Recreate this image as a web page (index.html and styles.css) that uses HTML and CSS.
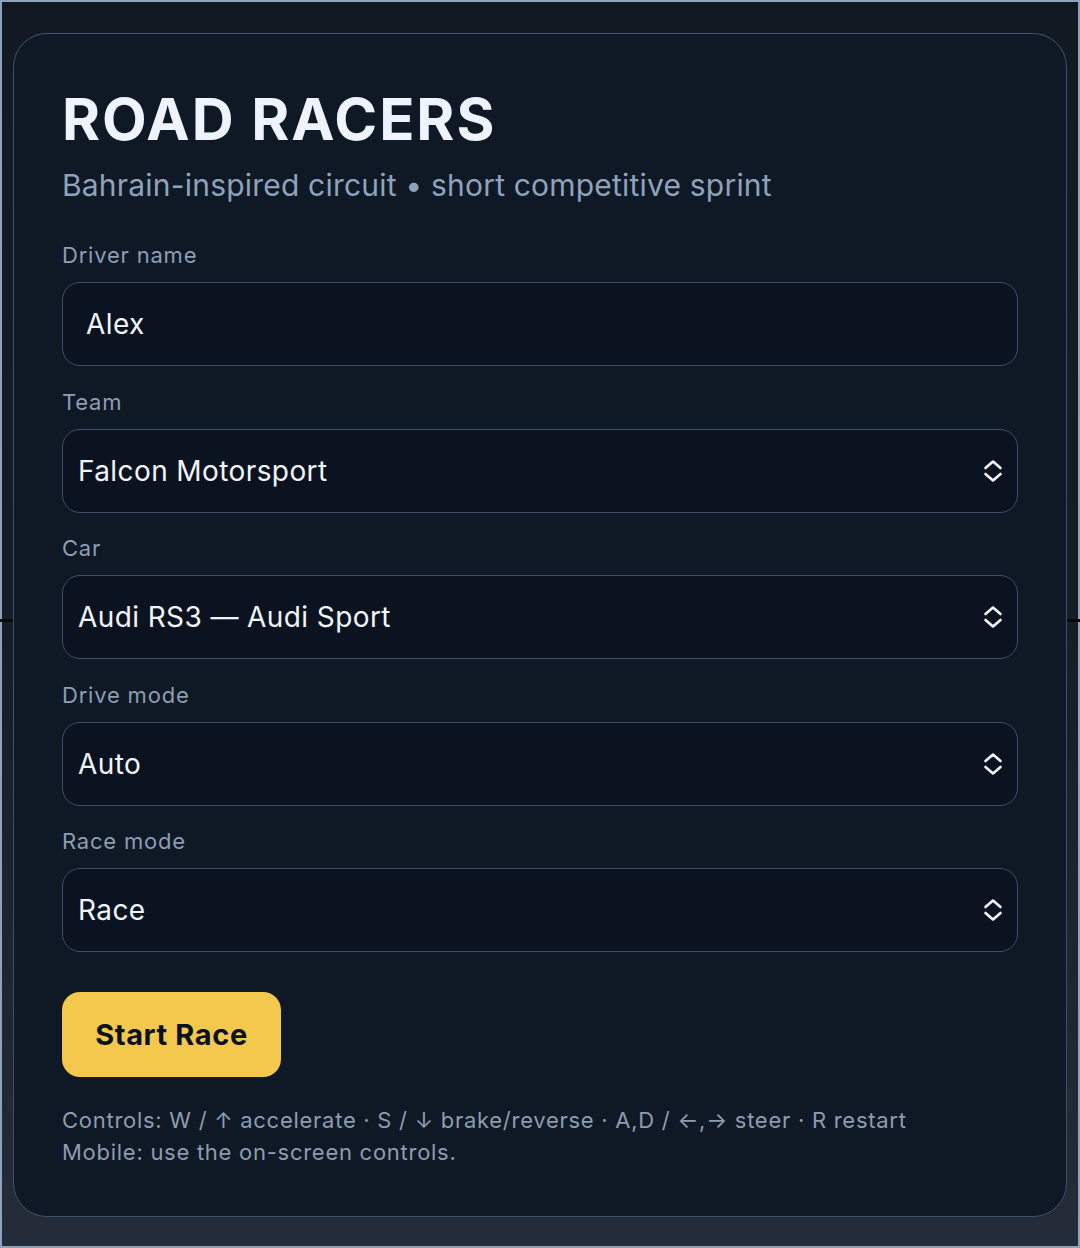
FILE: index.html
```html
<!DOCTYPE html>
<html lang="en">
<head>
<meta charset="utf-8">
<title>Road Racers</title>
<link rel="stylesheet" href="styles.css">
</head>
<body>
<div class="frame">
  <div class="track-line"></div>
  <form class="card">
    <h1 class="title">ROAD RACERS</h1>
    <p class="subtitle">Bahrain-inspired circuit • short competitive sprint</p>

    <label class="field">
      <span class="label">Driver name</span>
      <span class="control input"><span class="value">Alex</span></span>
    </label>

    <label class="field">
      <span class="label">Team</span>
      <span class="control select"><span class="value">Falcon Motorsport</span>
        <svg class="chev" viewBox="0 0 20 24" width="20" height="24"><path d="M2.5 9 L10 2.5 L17.5 9 M2.5 15 L10 21.5 L17.5 15" fill="none" stroke="#f5f7fb" stroke-width="2.6" stroke-linecap="round" stroke-linejoin="round"/></svg>
      </span>
    </label>

    <label class="field">
      <span class="label">Car</span>
      <span class="control select"><span class="value">Audi RS3 — Audi Sport</span>
        <svg class="chev" viewBox="0 0 20 24" width="20" height="24"><path d="M2.5 9 L10 2.5 L17.5 9 M2.5 15 L10 21.5 L17.5 15" fill="none" stroke="#f5f7fb" stroke-width="2.6" stroke-linecap="round" stroke-linejoin="round"/></svg>
      </span>
    </label>

    <label class="field">
      <span class="label">Drive mode</span>
      <span class="control select"><span class="value">Auto</span>
        <svg class="chev" viewBox="0 0 20 24" width="20" height="24"><path d="M2.5 9 L10 2.5 L17.5 9 M2.5 15 L10 21.5 L17.5 15" fill="none" stroke="#f5f7fb" stroke-width="2.6" stroke-linecap="round" stroke-linejoin="round"/></svg>
      </span>
    </label>

    <label class="field">
      <span class="label">Race mode</span>
      <span class="control select"><span class="value">Race</span>
        <svg class="chev" viewBox="0 0 20 24" width="20" height="24"><path d="M2.5 9 L10 2.5 L17.5 9 M2.5 15 L10 21.5 L17.5 15" fill="none" stroke="#f5f7fb" stroke-width="2.6" stroke-linecap="round" stroke-linejoin="round"/></svg>
      </span>
    </label>

    <div class="actions">
      <button type="button" class="start">Start Race</button>
    </div>

    <p class="help">Controls: W / ↑ accelerate · S / ↓ brake/reverse · A,D / ←,→ steer · R restart<br>Mobile: use the on-screen controls.</p>
  </form>
</div>
</body>
</html>
```

FILE: styles.css
```css
* { box-sizing: border-box; }

html, body {
  margin: 0;
  padding: 0;
  height: 1248px;
  font-family: "Inter", "Noto Sans", "Liberation Sans", sans-serif;
}

body {
  background: #1a202a;
}

.frame {
  position: relative;
  height: 1248px;
  border: 2px solid #8ea2bb;
  background: linear-gradient(180deg, #131922 0%, #171d27 50%, #242c39 100%);
  display: flex;
  align-items: center;
  justify-content: center;
  padding: 0 11px;
}

.track-line {
  position: absolute;
  left: -2px;
  right: -2px;
  top: 617px;
  height: 3px;
  background: #05080c;
}

.card {
  position: relative;
  width: 100%;
  height: 1184px;
  margin-top: 2px;
  background: #0f1825;
  border: 1.5px solid #3d526e;
  border-radius: 34px;
  padding: 53px 48px 48px;
  display: flex;
  flex-direction: column;
}

.title {
  margin: 0;
  font-size: 58px;
  line-height: 64px;
  font-weight: 700;
  letter-spacing: 2px;
  color: #eef3fe;
}

.subtitle {
  margin: 15px 0 0;
  font-size: 30px;
  line-height: 38px;
  letter-spacing: 0.2px;
  color: #8fa2bc;
}

.field {
  display: flex;
  flex-direction: column;
  gap: 12px;
  margin-top: 20.5px;
}

.field:first-of-type { margin-top: 36px; }

.label {
  font-size: 22px;
  line-height: 30px;
  letter-spacing: 0.8px;
  color: #8d9db3;
}

.control {
  height: 84px;
  border: 1.5px solid #3b4f6b;
  border-radius: 18px;
  background: #0b1320;
  display: flex;
  align-items: center;
  color: #f1f5fa;
  font-size: 28px;
  letter-spacing: 0.4px;
}

.input { padding: 0 23px; }
.select { padding: 0 14px 0 15px; justify-content: space-between; }

.chev { display: block; }

.actions {
  margin-top: 39.5px;
}

.start {
  height: 85px;
  width: 219px;
  border: none;
  border-radius: 18px;
  background: #f4c84c;
  color: #0b111a;
  font-family: inherit;
  font-size: 29px;
  font-weight: 700;
  letter-spacing: 0.6px;
  cursor: pointer;
}

.help {
  margin: 27px 0 0;
  font-size: 22px;
  line-height: 32px;
  letter-spacing: 0.73px;
  color: #8d9cb1;
}
```
